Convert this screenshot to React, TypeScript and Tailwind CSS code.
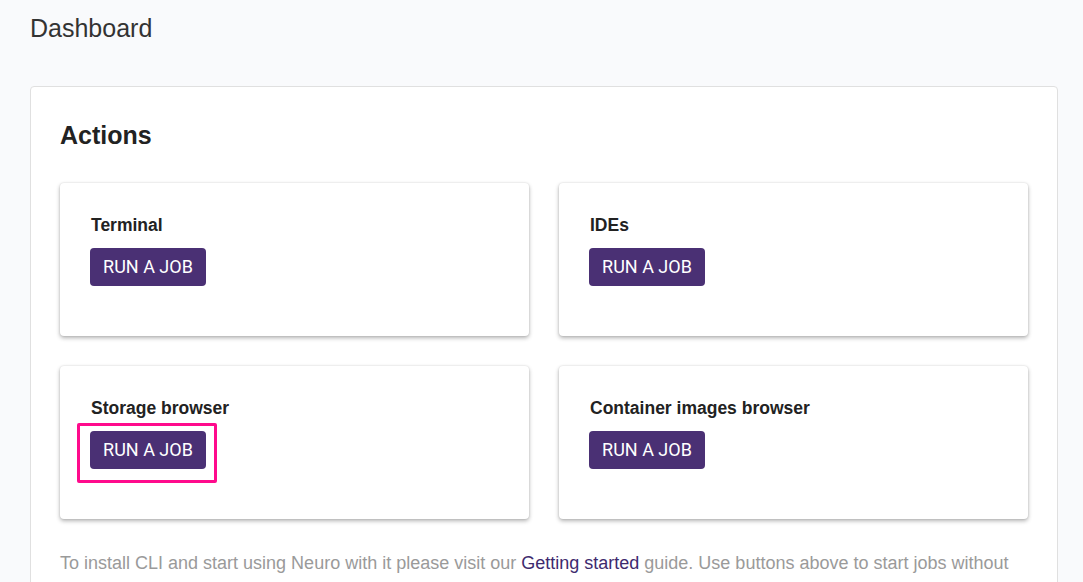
import React from "react";

function ActionCard({ title, highlight }: { title: string; highlight?: boolean }) {
  return (
    <div className="h-[153px] rounded-[4px] bg-white pl-[30px] pt-[32px] shadow-[0_2px_4px_rgba(0,0,0,0.3),0_0_2px_rgba(0,0,0,0.12)]">
      <div className="pl-[1px] text-[17.5px] font-bold leading-[20px] text-[#222]">{title}</div>
      <div className="relative mt-[13px] inline-block">
        <button className="h-[38px] w-[116px] rounded-[4px] bg-[#4a3074] text-[18px] leading-[38px] text-white [font-family:Roboto,sans-serif]">
          RUN A JOB
        </button>
        {highlight && (
          <div className="pointer-events-none absolute left-[-13px] top-[-8px] h-[60px] w-[140px] rounded-[2px] border-[3px] border-[#ff0a8c]" />
        )}
      </div>
    </div>
  );
}

export default function App() {
  return (
    <div className="h-[582px] w-[1083px] overflow-hidden bg-[#f9fafc] [font-family:'Liberation_Sans',Arial,sans-serif]">
      <div className="pl-[30px] pt-[14px]">
        <h1 className="text-[25px] font-normal leading-[28px] text-[#333]">Dashboard</h1>
      </div>
      <div className="ml-[30px] mt-[44px] w-[1028px] rounded-t-[4px] border border-[#e0e0e0] bg-white px-[29px] pt-[33px] pb-[40px]">
        <h2 className="text-[25px] font-bold leading-[30px] text-[#222]">Actions</h2>
        <div className="mt-[33px] grid grid-cols-2 gap-x-[30px] gap-y-[30px]">
          <ActionCard title="Terminal" />
          <ActionCard title="IDEs" />
          <ActionCard title="Storage browser" highlight />
          <ActionCard title="Container images browser" />
        </div>
        <p className="mt-[29px] text-[18px] leading-[30px] text-[#9a9a9a]">
          To install CLI and start using Neuro with it please visit our{" "}
          <span className="text-[#3e2a6e]">Getting started</span> guide. Use buttons above to start jobs without
          installing anything.
        </p>
      </div>
    </div>
  );
}
